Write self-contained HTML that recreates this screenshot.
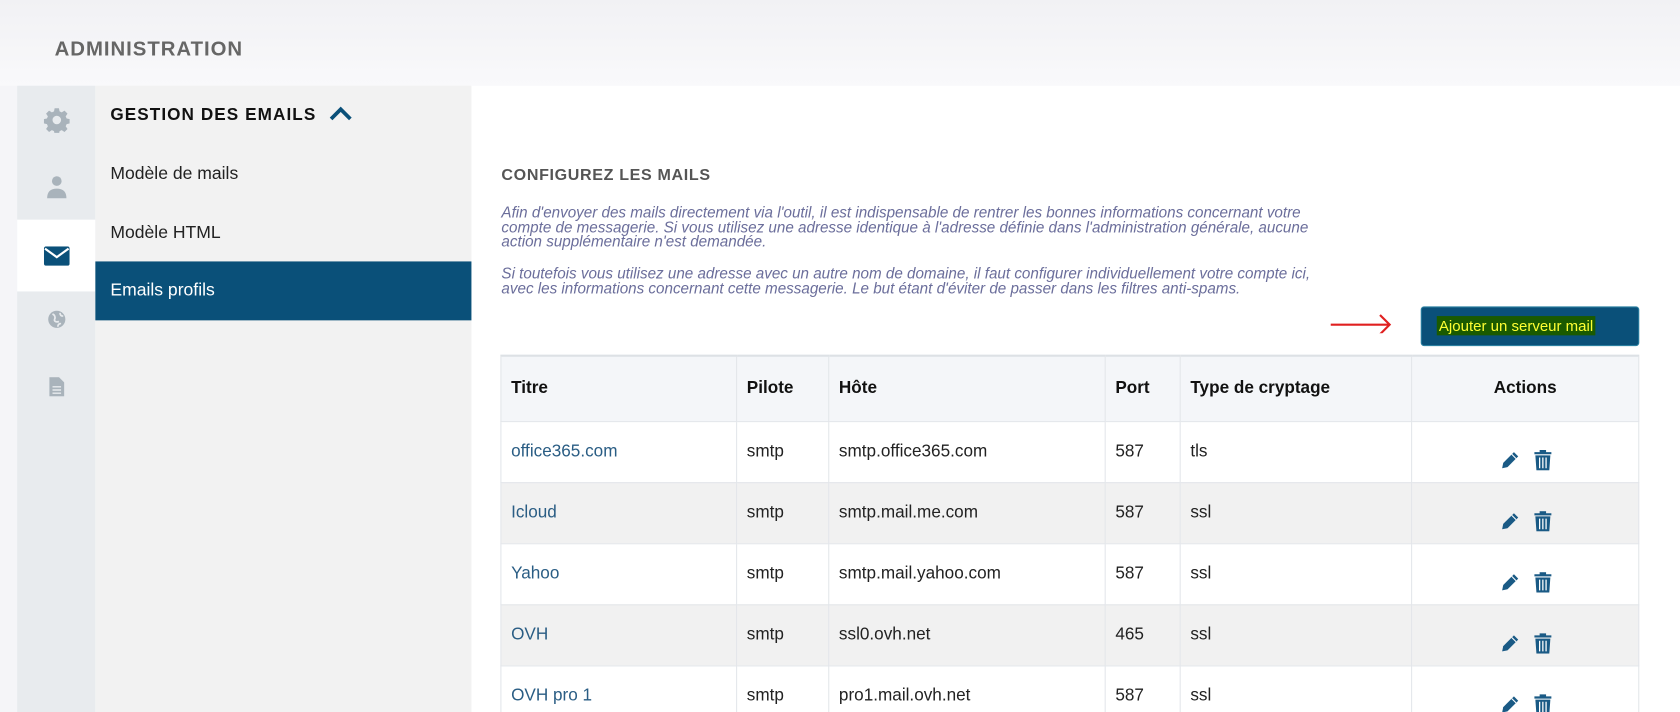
<!DOCTYPE html>
<html><head><meta charset="utf-8"><style>
*{margin:0;padding:0;box-sizing:border-box}
html,body{width:1680px;height:712px;overflow:hidden;background:#fff}
body{font-family:"Liberation Sans",sans-serif;position:relative}
#w{position:absolute;left:0;top:0;width:1568px;height:665px;transform:scale(1.07143);transform-origin:0 0}
.top{position:absolute;left:0;top:0;width:1568px;height:80px;background:linear-gradient(#f1f1f4,#f9f9fb)}
.lstrip{position:absolute;left:0;top:80px;width:16px;height:600px;background:#f5f5f8}
.title{position:absolute;left:51px;top:36px;font-size:19px;font-weight:bold;color:#666;letter-spacing:.9px}
.icons{position:absolute;left:16px;top:80px;width:73px;height:600px;background:#e8ebee}
.ic{position:absolute;left:0;width:73px;display:flex;justify-content:center;align-items:center}
.sub{position:absolute;left:89px;top:80px;width:351px;height:600px;background:#f2f2f2}
.sub .h{position:absolute;left:14px;top:19px;font-size:16px;font-weight:bold;color:#111;letter-spacing:1px}
.sub .it{position:absolute;left:14px;font-size:16.4px;color:#222}
.act{position:absolute;left:0;top:164px;width:351px;height:55px;background:#0a5079}
h2{position:absolute;left:468px;top:155px;font-size:15px;font-weight:bold;color:#555;letter-spacing:.6px}
.p{position:absolute;left:468px;font-size:14.2px;font-style:italic;color:#6b6e9b;line-height:13.6px;width:900px;white-space:nowrap}
.btn{position:absolute;left:1326px;top:286px;width:204px;height:37px;background:#0a5079;border-radius:3px;border:1px solid #2a7fa0}
.btn span{position:absolute;left:14px;top:8px;background:#1a5a00;color:#ffff33;font-size:14px;padding:1px 2px}
table{position:absolute;left:467px;top:331px;width:1063px;border-collapse:collapse;font-size:16px}
td,th{border:1px solid #e3e6ea;padding:0 9px;text-align:left;color:#222}
th{height:61px;background:#f4f6f9;font-weight:bold;color:#111;border-top:2px solid #dde1e5}
td{height:57px}
tr:nth-child(odd) td{background:#f1f1f1}
td:first-child{color:#2a5d84}
.a{text-align:center}
.a svg{vertical-align:middle;margin:0 7px;position:relative;top:8px}
</style></head><body>
<div id="w">
<div class="top"></div><div class="lstrip"></div>
<div class="title">ADMINISTRATION</div>
<div class="icons">
 <div class="ic" style="top:20px;height:24px"><svg width="24" height="24" viewBox="0 0 24 24"><path fill="#a9b3bb" d="M10 1h4l.6 3 2 .9 2.6-1.7 2.8 2.8-1.7 2.6.9 2 3 .6v4l-3 .6-.9 2 1.7 2.6-2.8 2.8-2.6-1.7-2 .9-.6 3h-4l-.6-3-2-.9-2.6 1.7-2.8-2.8 1.7-2.6-.9-2-3-.6v-4l3-.6.9-2-1.7-2.6 2.8-2.8 2.6 1.7 2-.9zM12 8a4 4 0 100 8 4 4 0 000-8z"/></svg></div>
 <div class="ic" style="top:83px;height:24px"><svg width="20" height="22" viewBox="0 0 20 22"><circle cx="10" cy="5" r="4.5" fill="#a9b3bb"/><path fill="#a9b3bb" d="M1 21c0-6 3-9 9-9s9 3 9 9z"/></svg></div>
 <div class="ic" style="top:125px;height:67px;background:#fff"><svg width="24" height="18" viewBox="0 0 24 18"><rect x="0" y="0" width="24" height="18" rx="2" fill="#0a5079"/><path d="M1 2l11 8 11-8" stroke="#fff" stroke-width="2" fill="none"/></svg></div>
 <div class="ic" style="top:207px;height:22px"><svg width="18" height="18" viewBox="0 0 18 18"><circle cx="9" cy="9" r="8" fill="#a9b3bb"/><path d="M5 4c2 1 3 3 2 5s2 3 4 2M12 3c0 2 1 3 3 3M10 16c0-2 1-3 3-3" stroke="#e8ebee" stroke-width="1.6" fill="none"/></svg></div>
 <div class="ic" style="top:270px;height:22px"><svg width="14" height="18" viewBox="0 0 14 18"><path fill="#a9b3bb" d="M0 0h9l5 5v13H0z"/><path d="M3 9h8M3 12h8M3 15h8" stroke="#e8ebee" stroke-width="1.3"/></svg></div>
</div>
<div class="sub">
 <div class="h">GESTION DES EMAILS <svg width="22" height="14" viewBox="0 0 22 14" style="margin-left:6px;vertical-align:-1px"><path d="M2 12l9-9 9 9" stroke="#0a5079" stroke-width="3.5" fill="none"/></svg></div>
 <div class="it" style="top:73px">Modèle de mails</div>
 <div class="it" style="top:128px">Modèle HTML</div>
 <div class="act"><div class="it" style="top:18px;color:#fff">Emails profils</div></div>
</div>
<h2>CONFIGUREZ LES MAILS</h2>
<div class="p" style="top:193px">Afin d'envoyer des mails directement via l'outil, il est indispensable de rentrer les bonnes informations concernant votre<br>compte de messagerie. Si vous utilisez une adresse identique à l'adresse définie dans l'administration générale, aucune<br>action supplémentaire n'est demandée.</div>
<div class="p" style="top:250px">Si toutefois vous utilisez une adresse avec un autre nom de domaine, il faut configurer individuellement votre compte ici,<br>avec les informations concernant cette messagerie. Le but étant d'éviter de passer dans les filtres anti-spams.</div>
<svg style="position:absolute;left:1240px;top:291px" width="60" height="20" viewBox="0 0 60 20"><path d="M2 12h55M48 3l9 9-9 9" stroke="#e02020" stroke-width="2" fill="none"/></svg>
<div class="btn"><span>Ajouter un serveur mail</span></div>
<table>
<tr><th style="width:220px">Titre</th><th style="width:86px">Pilote</th><th style="width:258px">Hôte</th><th style="width:70px">Port</th><th style="width:216px">Type de cryptage</th><th style="text-align:center">Actions</th></tr>
<tr><td>office365.com</td><td>smtp</td><td>smtp.office365.com</td><td>587</td><td>tls</td><td class="a">P</td></tr>
<tr><td>Icloud</td><td>smtp</td><td>smtp.mail.me.com</td><td>587</td><td>ssl</td><td class="a">P</td></tr>
<tr><td>Yahoo</td><td>smtp</td><td>smtp.mail.yahoo.com</td><td>587</td><td>ssl</td><td class="a">P</td></tr>
<tr><td>OVH</td><td>smtp</td><td>ssl0.ovh.net</td><td>465</td><td>ssl</td><td class="a">P</td></tr>
<tr><td>OVH pro 1</td><td>smtp</td><td>pro1.mail.ovh.net</td><td>587</td><td>ssl</td><td class="a">P</td></tr>
</table>
</div>
<script>
var ic='<svg width="18" height="18" viewBox="0 0 18 18"><path fill="#1a5a85" d="M13 1l4 4-10 10-5 1 1-5z"/><path d="M11 3l4 4" stroke="#fff" stroke-width="1"/></svg><svg width="16" height="19" viewBox="0 0 16 19"><path fill="#1a5a85" d="M5 0h6v2h5v2H0V2h5zM1 5h14l-1 14H2z"/><path d="M5 7v10M8 7v10M11 7v10" stroke="#fff" stroke-width="1.2"/></svg>';
document.querySelectorAll('td.a').forEach(function(e){e.innerHTML=ic});
</script>
</body></html>
